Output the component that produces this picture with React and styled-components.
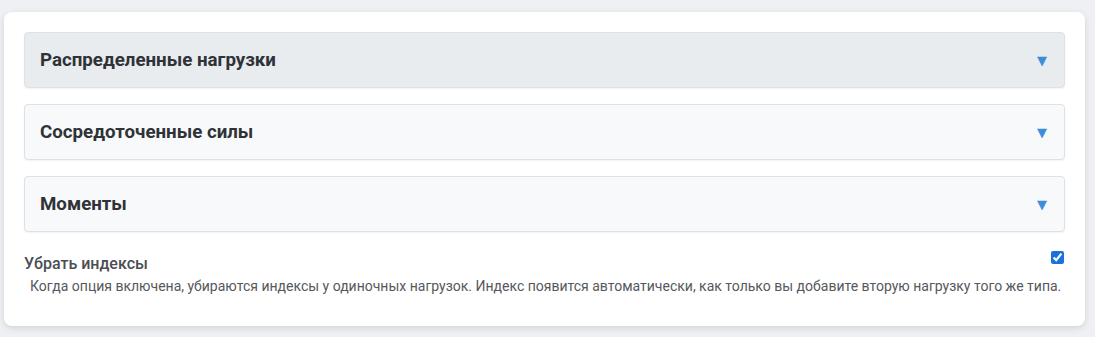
import React from "react";
import styled, { createGlobalStyle } from "styled-components";

const Global = createGlobalStyle`
  html, body { margin: 0; padding: 0; background: #eff0f3; }
  body { font-family: Roboto, "Liberation Sans", sans-serif; }
`;

const Page = styled.div`
  padding: 12px 10px 10px 4px;
`;

const Card = styled.div`
  background: #fff;
  border-radius: 8px;
  box-shadow: 0 2px 6px rgba(0, 0, 0, 0.12);
  padding: 20px 20px 30px 20px;
  display: flex;
  flex-direction: column;
  gap: 16px;
`;

const Panel = styled.div`
  height: 56px;
  box-sizing: border-box;
  border: 1px solid #dee2e6;
  border-radius: 4px;
  background: ${(p) => (p.$active ? "#e9ecef" : "#f8f9fa")};
  box-shadow: 0 1px 2px rgba(0, 0, 0, 0.05);
  display: flex;
  align-items: center;
  justify-content: space-between;
  padding: 0 16px 0 15px;
`;

const Title = styled.span`
  font-size: 18.72px;
  font-weight: 700;
  color: #2f3237;
`;

const Arrow = styled.span`
  color: #3b8ed8;
  font-size: 13px;
  font-family: "DejaVu Sans", sans-serif;
  margin-right: 1px;
`;

const Option = styled.div`
  display: flex;
  flex-direction: column;
  gap: 2px;
`;

const OptionRow = styled.label`
  display: flex;
  justify-content: space-between;
  align-items: flex-start;
`;

const Label = styled.span`
  font-size: 16px;
  font-weight: 500;
  color: #4a4d52;
  line-height: 20px;
  padding-top: 6px;
`;

const Check = styled.input`
  width: 13px;
  height: 13px;
  margin: 3px 1px 0 0;
  accent-color: #1a73d9;
`;

const Desc = styled.div`
  font-size: 14px;
  color: #55585d;
  line-height: 20px;
  padding-left: 6px;
`;

const sections = [
  { title: "Распределенные нагрузки", active: true },
  { title: "Сосредоточенные силы" },
  { title: "Моменты" },
];

export default function App() {
  return (
    <Page>
      <Global />
      <Card>
        {sections.map((s) => (
          <Panel key={s.title} $active={s.active}>
            <Title>{s.title}</Title>
            <Arrow>▼</Arrow>
          </Panel>
        ))}
        <Option>
          <OptionRow>
            <Label>Убрать индексы</Label>
            <Check type="checkbox" defaultChecked />
          </OptionRow>
          <Desc>
            Когда опция включена, убираются индексы у одиночных нагрузок. Индекс появится автоматически, как только вы добавите вторую нагрузку того же типа.
          </Desc>
        </Option>
      </Card>
    </Page>
  );
}
